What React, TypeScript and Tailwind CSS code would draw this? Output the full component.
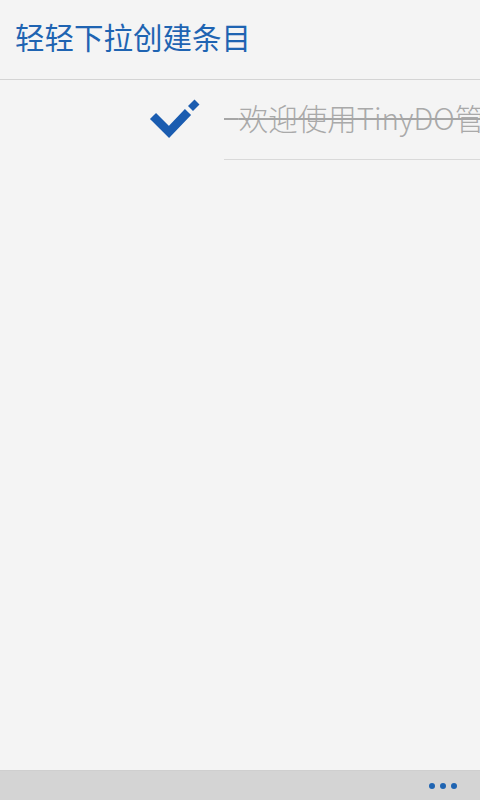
import React from "react";

export default function App() {
  const cjk = { fontFamily: '"Noto Sans CJK SC", "Noto Sans", sans-serif' };
  return (
    <div className="w-[480px] h-[800px] bg-[#f4f4f4] flex flex-col overflow-hidden" style={cjk}>
      <div className="h-[80px] shrink-0 flex items-center pl-[15px] pb-[5px] border-b border-[#d4d4d4]">
        <span className="text-[29.5px] leading-none text-[#1f64b2]">轻轻下拉创建条目</span>
      </div>
      <div className="flex flex-1 flex-col">
        <div className="flex h-[80px]">
          <div className="w-[224px] shrink-0 flex items-start">
            <svg className="ml-[148px] mt-[18px]" width="52" height="42" viewBox="0 0 52 42">
              <polyline points="5,18 21,34 40,14" fill="none" stroke="#1a5cb0" strokeWidth="8.5" strokeLinejoin="miter" />
              <line x1="42.5" y1="10.5" x2="49" y2="4" stroke="#1a5cb0" strokeWidth="7" />
            </svg>
          </div>
          <div className="flex-1 min-w-0 border-b border-[#d9d9d9] flex items-center pb-[3px] overflow-hidden">
            <span className="whitespace-nowrap text-[29.5px] leading-none font-light text-[#a9a9a9] line-through decoration-2 decoration-[#a6a6a6]">{"\u2002"}欢迎使用TinyDO管理您的待办事项</span>
          </div>
        </div>
      </div>
      <div className="h-[30px] shrink-0 bg-[#d4d4d4] border-t border-[#cfcfcf] flex items-center justify-end pr-[23px] gap-[5px]">
        <span className="w-[6px] h-[6px] rounded-full bg-[#1f64b2]" />
        <span className="w-[6px] h-[6px] rounded-full bg-[#1f64b2]" />
        <span className="w-[6px] h-[6px] rounded-full bg-[#1f64b2]" />
      </div>
    </div>
  );
}
